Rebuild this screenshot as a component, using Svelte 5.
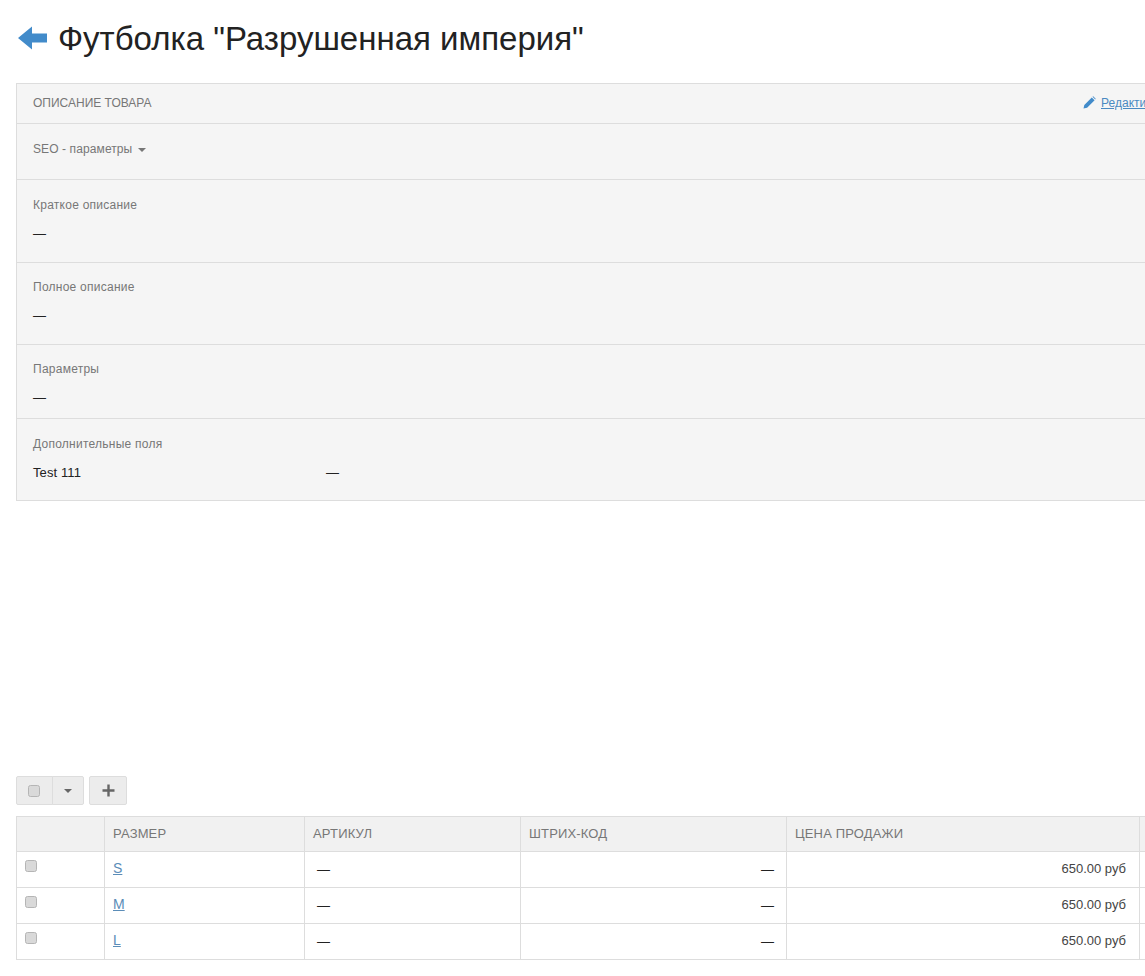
<script>
  const fields = [
    { label: 'Краткое описание', cls: 'f1' },
    { label: 'Полное описание', cls: 'f2' },
    { label: 'Параметры', cls: 'f3' }
  ];
  const sizes = ['S', 'M', 'L'];
</script>

<div class="page">
  <header class="title">
    <svg class="back" width="30" height="24" viewBox="0 0 30 24" aria-hidden="true">
      <path d="M0 12 L14 0.500 L14 7.500 L29 7.500 L29 16.500 L14 16.500 L14 23.500 Z" fill="#428bca" />
    </svg>
    <h1>Футболка "Разрушенная империя"</h1>
  </header>

  <section class="panel">
    <div class="head">
      <span class="head-text">ОПИСАНИЕ ТОВАРА</span>
      <a class="edit" href="#edit">
        <svg width="13" height="13" viewBox="0 0 13 13" aria-hidden="true">
          <path d="M0.500 12.500 L1.300 8.900 L8.800 1.400 L11.600 4.200 L4.100 11.700 Z M9.500 0.700 L10.200 0.300 L12.700 2.800 L12.300 3.500 Z" fill="#428bca" />
        </svg>
        <span>Редактировать</span>
      </a>
    </div>
    <div class="seo">SEO - параметры <i class="caret"></i></div>
    {#each fields as f}
      <div class="field {f.cls}">
        <div class="label">{f.label}</div>
        <div class="value">—</div>
      </div>
    {/each}
    <div class="field f4">
      <div class="label">Дополнительные поля</div>
      <div class="extra"><span class="extra-name">Test 111</span><span>—</span></div>
    </div>
  </section>

  <div class="toolbar">
    <div class="btn-group">
      <span class="btn check-btn"><input type="checkbox" /></span>
      <span class="btn caret-btn"><i class="caret dark"></i></span>
    </div>
    <span class="btn plus-btn">
      <svg width="13" height="13" viewBox="0 0 13 13" aria-hidden="true">
        <path d="M5.300 0.500 H7.700 V5.300 H12.500 V7.700 H7.700 V12.500 H5.300 V7.700 H0.500 V5.300 H5.300 Z" fill="#666" />
      </svg>
    </span>
  </div>

  <table>
    <colgroup>
      <col class="c1" /><col class="c2" /><col class="c3" /><col class="c4" /><col class="c5" /><col class="c6" />
    </colgroup>
    <thead>
      <tr><th></th><th>РАЗМЕР</th><th>АРТИКУЛ</th><th>ШТРИХ-КОД</th><th>ЦЕНА ПРОДАЖИ</th><th></th></tr>
    </thead>
    <tbody>
      {#each sizes as s}
        <tr>
          <td class="cb"><input type="checkbox" /></td>
          <td class="size"><a href="#size">{s}</a></td>
          <td class="sku">—</td>
          <td class="right">—</td>
          <td class="right price">650.00 руб</td>
          <td></td>
        </tr>
      {/each}
    </tbody>
  </table>
</div>

<style>
  :global(body) {
    margin: 0;
    background: #fff;
    overflow: hidden;
  }
  .page {
    width: 1145px;
    height: 976px;
    overflow: hidden;
    box-sizing: border-box;
    padding: 20px 0 0 16px;
    font-family: "Liberation Sans", Arial, sans-serif;
    font-size: 12px;
    color: #222;
  }
  .title {
    display: flex;
    align-items: center;
    height: 37px;
    gap: 10px;
    padding-left: 2px;
  }
  .back { flex: none; margin-top: -2px; }
  h1 {
    margin: 0;
    font-size: 33px;
    font-weight: 400;
    line-height: 37px;
    color: #222;
    white-space: nowrap;
  }
  .panel {
    width: 1185px;
    margin-top: 26px;
    box-sizing: border-box;
    background: #f5f5f5;
    border: 1px solid #ddd;
    color: #777;
  }
  .head {
    display: flex;
    justify-content: space-between;
    align-items: center;
    box-sizing: content-box;
    height: 37px;
    padding: 0 16px 2px;
    border-bottom: 1px solid #ddd;
  }
  .edit {
    display: flex;
    align-items: center;
    gap: 5px;
    white-space: nowrap;
  }
  .edit span {
    color: #4a8ac2;
    text-decoration: underline;
  }
  .seo {
    height: 56px;
    box-sizing: border-box;
    padding: 18px 16px 0;
    line-height: 14px;
    letter-spacing: 0.1px;
    border-bottom: 1px solid #ddd;
  }
  .caret {
    display: inline-block;
    width: 0;
    height: 0;
    margin-left: 2px;
    vertical-align: middle;
    border-top: 4px solid #777;
    border-left: 4px solid transparent;
    border-right: 4px solid transparent;
  }
  .caret.dark { border-top-color: #666; margin: 0; }
  .field {
    box-sizing: border-box;
    padding: 18px 16px 0;
    border-bottom: 1px solid #ddd;
  }
  .f1 { height: 83px; }
  .f2 { height: 82px; padding-top: 17px; }
  .f3 { height: 74px; padding-top: 17px; }
  .f4 { height: 81px; border-bottom: 0; }
  .label { line-height: 14px; letter-spacing: 0.25px; }
  .value {
    margin-top: 14px;
    font-size: 13px;
    line-height: 16px;
    color: #222;
  }
  .extra {
    display: flex;
    margin-top: 14px;
    line-height: 16px;
    font-size: 13px;
    color: #222;
  }
  .extra-name { width: 293px; letter-spacing: 0.1px; }
  .toolbar {
    display: flex;
    gap: 5px;
    margin-top: 275px;
    height: 29px;
  }
  .btn-group { display: flex; }
  .btn {
    display: flex;
    align-items: center;
    justify-content: center;
    box-sizing: border-box;
    height: 29px;
    background: #ececec;
    border: 1px solid #ddd;
  }
  .check-btn { width: 37px; padding-right: 2px; border-radius: 2px 0 0 2px; }
  .caret-btn { width: 32px; margin-left: -1px; border-radius: 0 2px 2px 0; }
  .plus-btn { width: 38px; border-radius: 2px; }
  input[type="checkbox"] {
    margin: 0;
    width: 12px;
    height: 12px;
    appearance: none;
    box-sizing: border-box;
    background: #d9d9d9;
    border: 1px solid #b5b5b5;
    border-radius: 2.500px;
  }
  table {
    margin-top: 11px;
    width: 1300px;
    table-layout: fixed;
    border-collapse: collapse;
    font-size: 13px;
  }
  .c1 { width: 88px; }
  .c2 { width: 200px; }
  .c3 { width: 216px; }
  .c4 { width: 266px; }
  .c5 { width: 353px; }
  th, td {
    border: 1px solid #ddd;
    padding: 0 8px;
    text-align: left;
  }
  th {
    height: 35px;
    box-sizing: border-box;
    background: #f1f1f1;
    font-size: 13px;
    font-weight: 400;
    letter-spacing: 0.15px;
    color: #777;
    padding-bottom: 2px;
  }
  td {
    height: 36px;
    box-sizing: border-box;
    color: #222;
  }
  td a { font-size: 14px; color: #5b8db8; }
  .size { padding-bottom: 4px; }
  .cb { vertical-align: top; padding-top: 8px; }
  .sku { padding-left: 12px; }
  .right { text-align: right; padding-right: 12px; }
  .price { font-size: 13px; color: #444; padding-right: 13px; padding-bottom: 3px; }
</style>
